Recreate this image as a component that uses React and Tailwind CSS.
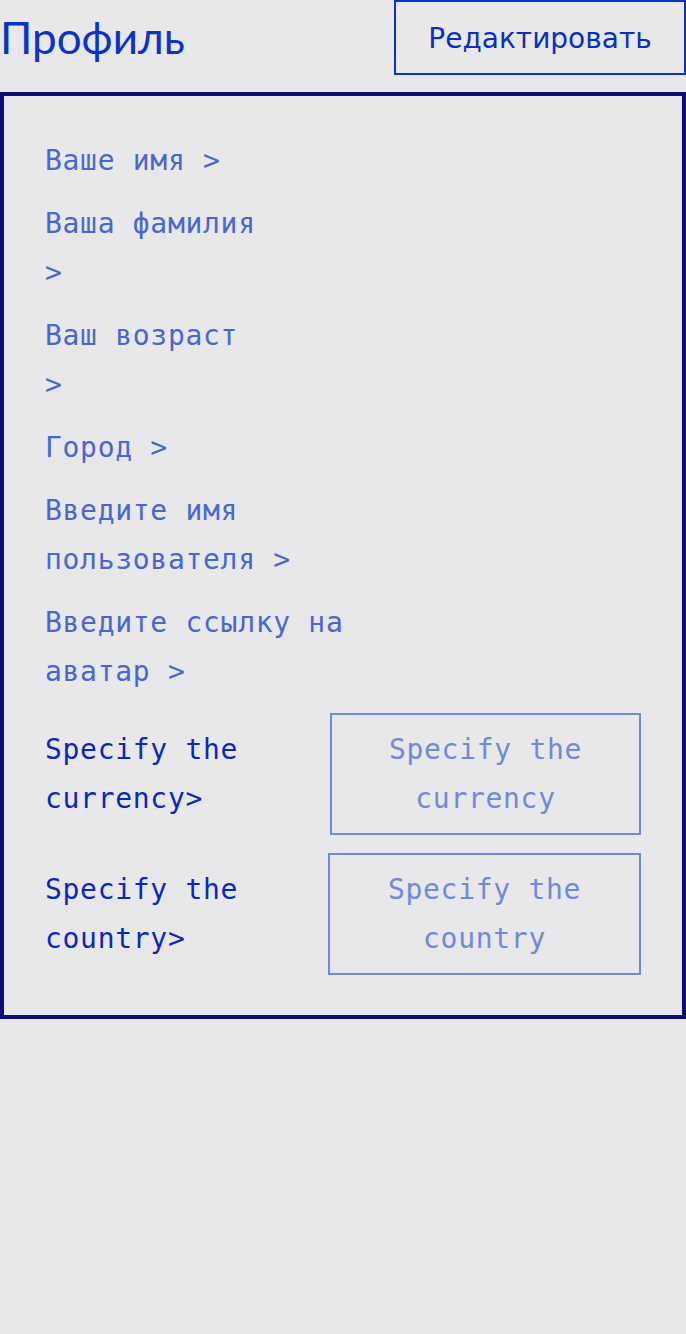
import React from "react";

const mono = { fontFamily: '"DejaVu Sans Mono", monospace' };

const fields = [
  ["Ваше имя >"],
  ["Ваша фамилия", ">"],
  ["Ваш возраст", ">"],
  ["Город >"],
  ["Введите имя", "пользователя >"],
  ["Введите ссылку на", "аватар >"],
];

const selects = [
  { top: "Specify the", label: "currency>", hint: "currency", width: "w-[311px]" },
  { top: "Specify the", label: "country>", hint: "country", width: "w-[313px]" },
];

export default function App() {
  return (
    <div className="min-h-[1334px] bg-[#e8e7ea]">
      {/* Header */}
      <div className="flex items-start justify-between">
        <h1 className="text-[44px] leading-[75px] text-[#0a34c8] font-['Lato',sans-serif]">
          Профиль
        </h1>
        <button className="h-[75px] w-[292px] border-2 border-[#0a34c8] pt-[2px] text-[28px] text-[#0a30c0] font-['DejaVu_Sans',sans-serif]">
          Редактировать
        </button>
      </div>

      {/* Profile card */}
      <div
        className="mt-[17px] border-4 border-[#0f0c78] px-[41px] pt-[40px] pb-[40px] text-[28px] leading-[49px] tracking-[0.7px]"
        style={mono}
      >
        <div className="flex flex-col gap-[14px] text-[#4a66d2]">
          {fields.map((lines, i) => (
            <div key={i}>
              {lines.map((l, j) => (
                <div key={j} className="whitespace-pre">{l}</div>
              ))}
            </div>
          ))}
        </div>

        <div className="mt-[17px] flex flex-col gap-[18px]">
          {selects.map((s, i) => (
            <div key={i} className="flex items-center justify-between">
              <div className="text-[#0a28c0]">
                <div>{s.top}</div>
                <div>{s.label}</div>
              </div>
              <div className={`${s.width} border-2 border-[#7189d9] py-[10px] text-center text-[#7189d9]`}>
                <div>{s.top}</div>
                <div>{s.hint}</div>
              </div>
            </div>
          ))}
        </div>
      </div>
    </div>
  );
}
